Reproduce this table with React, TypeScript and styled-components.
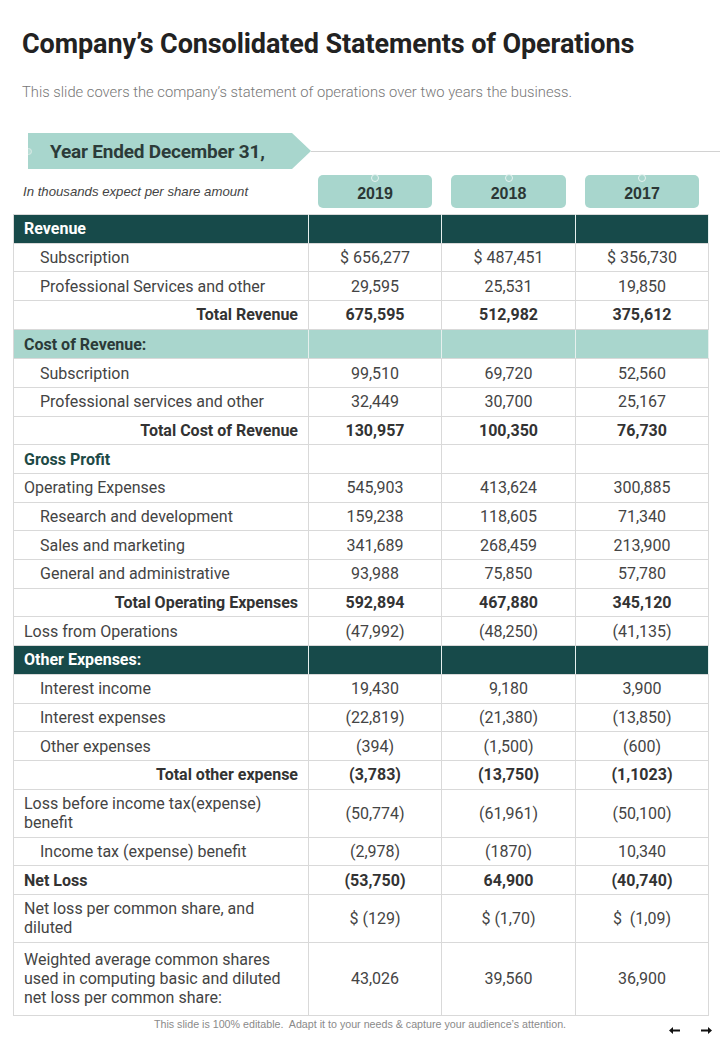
import React from "react";
import styled, { createGlobalStyle, css } from "styled-components";

const GlobalStyle = createGlobalStyle`
  html, body { margin: 0; padding: 0; background: #ffffff; }
  body { font-family: Roboto, "Noto Sans", sans-serif; }
`;

const Page = styled.div`
  width: 720px;
  height: 1040px;
  display: flex;
  flex-direction: column;
  overflow: hidden;
`;

const Header = styled.header`
  padding: 29px 22px 0;
`;

const Title = styled.h1`
  margin: 0;
  font-size: 27px;
  line-height: 30px;
  font-weight: 700;
  letter-spacing: -0.1px;
  color: #222222;
`;

const Subtitle = styled.p`
  margin: 24px 0 0;
  font-size: 14.75px;
  line-height: 18px;
  font-weight: 300;
  color: #777777;
`;

const BannerRow = styled.div`
  margin-top: 32px;
  padding-left: 28px;
  display: flex;
  align-items: center;
  height: 36px;
`;

const Banner = styled.div`
  position: relative;
  width: 283px;
  height: 36px;
  background: #a8d6cd;
  clip-path: polygon(0 0, 264px 0, 283px 50%, 264px 100%, 0 100%);
  display: flex;
  align-items: center;
  padding-left: 22px;
  box-sizing: border-box;
  font-size: 19px;
  font-weight: 700;
  letter-spacing: -0.2px;
  color: #2c3b39;
`;

const Ring = styled.span`
  position: absolute;
  left: -3px;
  top: 50%;
  width: 5px;
  height: 5px;
  margin-top: -3.5px;
  border-radius: 50%;
  border: 1px solid #d8e9e5;
  background: #b9ddd6;
`;

const BannerLine = styled.div`
  flex: 1;
  height: 1px;
  background: #d2d2d2;
`;

const YearRow = styled.div`
  margin: 6px 13px 0;
  display: grid;
  grid-template-columns: 295px 133px 134px 133px;
  align-items: center;
  height: 33px;
`;

const Note = styled.span`
  padding-left: 10px;
  font-family: "Liberation Sans", Arial, sans-serif;
  font-style: italic;
  font-size: 13.2px;
  color: #444444;
`;

const YearTab = styled.div`
  position: relative;
  margin: 0 9px 0 10px;
  height: 33px;
  border-radius: 5px;
  background: #a8d6cd;
  display: flex;
  align-items: center;
  justify-content: center;
  padding-top: 4px;
  box-sizing: border-box;
  font-family: "Liberation Sans", Arial, sans-serif;
  font-size: 16px;
  font-weight: 700;
  color: #2b3735;
`;

const TabRing = styled.span`
  position: absolute;
  top: -1px;
  left: 50%;
  margin-left: -4px;
  width: 6px;
  height: 6px;
  border-radius: 50%;
  border: 1px solid #e8f3f1;
`;

const Table = styled.table`
  margin: 6px 13px 0;
  width: 695px;
  border-collapse: collapse;
  table-layout: fixed;
  border: 1px solid #d9d9d9;
  font-size: 16px;
  line-height: 19px;
  color: #444444;
`;

type Kind = "dark" | "light" | "sub" | "total" | "plain" | "accent" | "strong";

const Row = styled.tr<{ $kind: Kind; $h: number }>`
  height: ${(p) => p.$h}px;
  ${(p) =>
    p.$kind === "dark" &&
    css`
      background: #174a4a;
      color: #ffffff;
      font-weight: 700;
    `}
  ${(p) =>
    p.$kind === "light" &&
    css`
      background: #a9d6cd;
      color: #2b3a38;
      font-weight: 700;
    `}
  ${(p) =>
    (p.$kind === "total" || p.$kind === "strong") &&
    css`
      font-weight: 700;
      color: #333333;
    `}
`;

const Label = styled.td<{ $kind: Kind }>`
  padding: 0 10px;
  vertical-align: middle;
  white-space: pre-line;
  border: 1px solid #d9d9d9;
  ${(p) => p.$kind === "sub" && css`padding-left: 26px;`}
  ${(p) => p.$kind === "total" && css`text-align: right;`}
  ${(p) =>
    p.$kind === "accent" &&
    css`
      font-weight: 700;
      color: #1e4a46;
    `}
  ${(p) =>
    (p.$kind === "dark" || p.$kind === "light") &&
    css`
      border-color: #d9d9d9 #e6f0ee #d9d9d9 #d9d9d9;
    `}
`;

const Num = styled.td<{ $band: boolean }>`
  padding: 0 4px;
  text-align: center;
  vertical-align: middle;
  white-space: pre;
  border: 1px solid #d9d9d9;
  ${(p) =>
    p.$band &&
    css`
      border-left-color: #e6f0ee;
      border-right-color: #e6f0ee;
    `}
`;

const Footer = styled.footer`
  flex: 1;
  display: grid;
  grid-template-columns: 1fr auto 1fr;
  align-items: start;
  padding-top: 2px;
`;

const FootText = styled.span`
  grid-column: 2;
  font-family: "Liberation Sans", Arial, sans-serif;
  font-size: 10.7px;
  color: #8a8a8a;
`;

const Nav = styled.div`
  grid-column: 3;
  justify-self: end;
  display: flex;
  gap: 21px;
  padding: 9px 8px 0 0;
`;

const Arrow = ({ dir }: { dir: "l" | "r" }) => (
  <svg width="11" height="7" viewBox="0 0 11 7">
    {dir === "l" ? (
      <path d="M0 3.5 L4 0 V2.4 H11 V4.6 H4 V7 Z" fill="#111" />
    ) : (
      <path d="M11 3.5 L7 0 V2.4 H0 V4.6 H7 V7 Z" fill="#111" />
    )}
  </svg>
);

type Line = { kind: Kind; label: string; v?: string[]; h?: number };

const rows: Line[] = [
  { kind: "dark", label: "Revenue" },
  { kind: "sub", label: "Subscription", v: ["$ 656,277", "$ 487,451", "$ 356,730"] },
  { kind: "sub", label: "Professional Services and other", v: ["29,595", "25,531", "19,850"] },
  { kind: "total", label: "Total Revenue", v: ["675,595", "512,982", "375,612"] },
  { kind: "light", label: "Cost of Revenue:", h: 29.5 },
  { kind: "sub", label: "Subscription", v: ["99,510", "69,720", "52,560"] },
  { kind: "sub", label: "Professional services and other", v: ["32,449", "30,700", "25,167"] },
  { kind: "total", label: "Total Cost of Revenue", v: ["130,957", "100,350", "76,730"] },
  { kind: "accent", label: "Gross Profit", v: ["", "", ""] },
  { kind: "plain", label: "Operating Expenses", v: ["545,903", "413,624", "300,885"] },
  { kind: "sub", label: "Research and development", v: ["159,238", "118,605", "71,340"] },
  { kind: "sub", label: "Sales and marketing", v: ["341,689", "268,459", "213,900"] },
  { kind: "sub", label: "General and administrative", v: ["93,988", "75,850", "57,780"] },
  { kind: "total", label: "Total Operating Expenses", v: ["592,894", "467,880", "345,120"] },
  { kind: "plain", label: "Loss from Operations", v: ["(47,992)", "(48,250)", "(41,135)"] },
  { kind: "dark", label: "Other Expenses:" },
  { kind: "sub", label: "Interest income", v: ["19,430", "9,180", "3,900"] },
  { kind: "sub", label: "Interest expenses", v: ["(22,819)", "(21,380)", "(13,850)"] },
  { kind: "sub", label: "Other expenses", v: ["(394)", "(1,500)", "(600)"] },
  { kind: "total", label: "Total other expense", v: ["(3,783)", "(13,750)", "(1,1023)"] },
  { kind: "plain", label: "Loss before income tax(expense)\nbenefit", v: ["(50,774)", "(61,961)", "(50,100)"], h: 48 },
  { kind: "sub", label: "Income tax (expense) benefit", v: ["(2,978)", "(1870)", "10,340"] },
  { kind: "strong", label: "Net Loss", v: ["(53,750)", "64,900", "(40,740)"] },
  { kind: "plain", label: "Net loss per common share, and\ndiluted", v: ["$ (129)", "$ (1,70)", "$  (1,09)"], h: 48 },
  {
    kind: "plain",
    label: "Weighted average common shares\nused in computing basic and diluted\nnet loss per common share:",
    v: ["43,026", "39,560", "36,900"],
    h: 73,
  },
];

export default function App() {
  return (
    <Page>
      <GlobalStyle />
      <Header>
        <Title>Company’s Consolidated Statements of Operations</Title>
        <Subtitle>This slide covers the company’s statement of operations over two years the business.</Subtitle>
      </Header>
      <BannerRow>
        <Banner>
          <Ring />
          Year Ended December 31,
        </Banner>
        <BannerLine />
      </BannerRow>
      <YearRow>
        <Note>In thousands expect per share amount</Note>
        {["2019", "2018", "2017"].map((y) => (
          <YearTab key={y}>
            <TabRing />
            {y}
          </YearTab>
        ))}
      </YearRow>
      <Table>
        <colgroup>
          <col style={{ width: 295 }} />
          <col style={{ width: 133 }} />
          <col style={{ width: 134 }} />
          <col style={{ width: 133 }} />
        </colgroup>
        <tbody>
          {rows.map((r, i) => {
            const band = r.kind === "dark" || r.kind === "light";
            const vals = r.v ?? ["", "", ""];
            return (
              <Row key={i} $kind={r.kind} $h={r.h ?? 28.7}>
                <Label $kind={r.kind}>{r.label}</Label>
                {vals.map((v, j) => (
                  <Num key={j} $band={band}>
                    {v}
                  </Num>
                ))}
              </Row>
            );
          })}
        </tbody>
      </Table>
      <Footer>
        <FootText>This slide is 100% editable.&nbsp; Adapt it to your needs &amp; capture your audience’s attention.</FootText>
        <Nav>
          <Arrow dir="l" />
          <Arrow dir="r" />
        </Nav>
      </Footer>
    </Page>
  );
}
